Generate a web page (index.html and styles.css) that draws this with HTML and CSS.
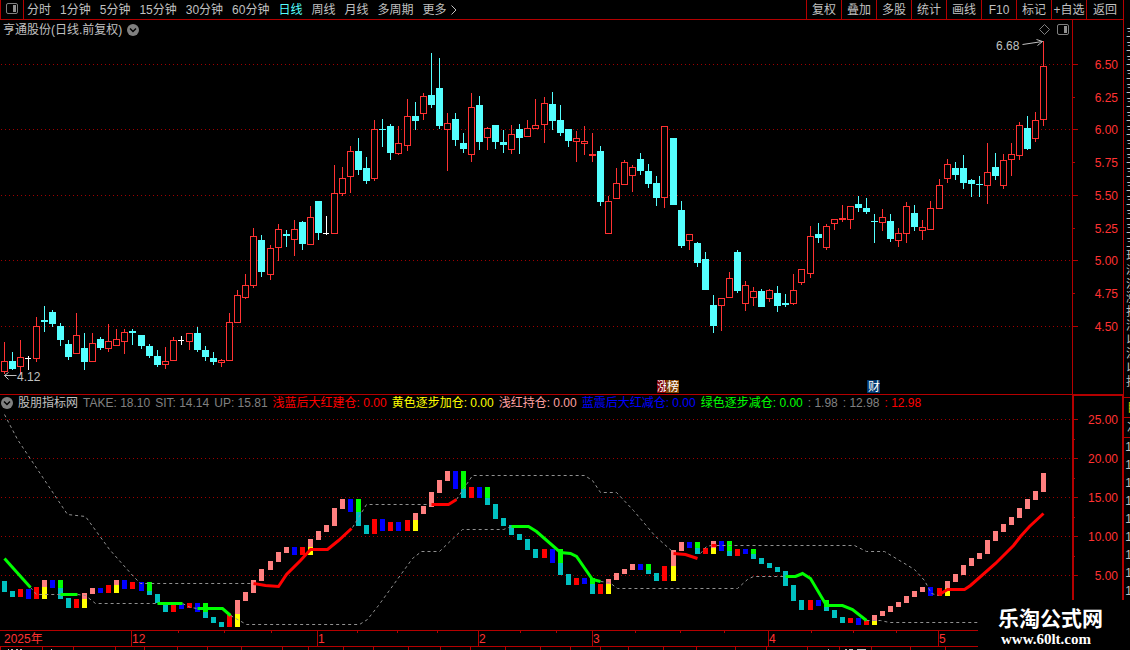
FILE: index.html
```html
<!DOCTYPE html>
<html lang="zh-CN">
<head>
  <meta charset="UTF-8">
  <title>亨通股份 日线</title>
  <link rel="stylesheet" href="styles.css">
</head>
<body>
  <main class="terminal">
    <nav class="toolbar">
      <button class="layout-btn" aria-label="布局">
        <svg width="12" height="11" viewBox="0 0 12 11"><rect x=".5" y=".5" width="11" height="10" rx="1.5" fill="none" stroke="#808080"/><rect x="7" y="2" width="3" height="7" fill="#909090"/></svg>
      </button>
      <div class="periods">
        <button>分时</button>
        <button>1分钟</button>
        <button>5分钟</button>
        <button>15分钟</button>
        <button>30分钟</button>
        <button>60分钟</button>
        <button class="active">日线</button>
        <button>周线</button>
        <button>月线</button>
        <button>多周期</button>
        <button class="more">更多
          <svg width="6" height="10" viewBox="0 0 6 10"><path d="M.5 .5L5 5L.5 9.5" fill="none" stroke="#c0c0c0"/></svg>
        </button>
      </div>
      <div class="tools">
        <button>复权</button>
        <button>叠加</button>
        <button>多股</button>
        <button>统计</button>
        <button>画线</button>
        <button>F10</button>
        <button>标记</button>
        <button>+自选</button>
        <button>返回</button>
      </div>
    </nav>

    <section class="panel price-panel">
      <div class="panel-head">
        <h1>亨通股份(日线.前复权)</h1>
        <button class="round" aria-label="展开">
          <svg width="12" height="12" viewBox="0 0 12 12"><circle cx="6" cy="6" r="6" fill="#808080"/><path d="M3 4.5L6 7.5L9 4.5" fill="none" stroke="#000" stroke-width="1.5"/></svg>
        </button>
      </div>
      <div class="panel-icons">
        <svg width="11" height="11" viewBox="0 0 11 11"><path d="M5.5 .5L10.5 5.5L5.5 10.5L.5 5.5Z" fill="none" stroke="#808080"/></svg>
        <svg width="12" height="11" viewBox="0 0 12 11"><rect x=".5" y=".5" width="11" height="10" rx="1.5" fill="none" stroke="#808080"/><rect x="7" y="2" width="3" height="7" fill="#909090"/></svg>
      </div>
      <svg class="chart" id="price" viewBox="0 20 1123 374"></svg>
    </section>

    <section class="panel indicator-panel">
      <div class="panel-head">
        <button class="round" aria-label="指标">
          <svg width="12" height="12" viewBox="0 0 12 12"><circle cx="6" cy="6" r="6" fill="#808080"/><path d="M3 4.5L6 7.5L9 4.5" fill="none" stroke="#000" stroke-width="1.5"/></svg>
        </button>
        <h2>股朋指标网</h2>
        <span>TAKE: 18.10</span>
        <span>SIT: 14.14</span>
        <span>UP: 15.81</span>
        <span class="red">浅蓝后大红建仓: 0.00</span>
        <span class="yellow">黄色逐步加仓: 0.00</span>
        <span class="pink">浅红持仓: 0.00</span>
        <span class="blue">蓝震后大红减仓: 0.00</span>
        <span class="green">绿色逐步减仓: 0.00</span>
        <span>: 1.98</span>
        <span>: 12.98</span>
        <span class="red">: 12.98</span>
      </div>
      <svg class="chart" id="indicator" viewBox="0 395 1123 235"></svg>
    </section>

    <svg class="chart" id="dates" viewBox="0 630 1123 20"></svg>
  </main>

  <aside class="side">
    <div class="side-text">主主主主主主主主主主主主主主主主现淡沙涨打涉以江以扣</div>
    <div class="side-tab yellow">目</div>
    <div class="side-tab">次</div>
    <div class="side-nums">1 1 1 1 1 1 1 1 1</div>
  </aside>

  <div class="watermark">
    <strong>乐淘公式网</strong>
    <span>www.60lt.com</span>
  </div>

  <script src="chart.js"></script>
</body>
</html>
```
FILE: styles.css
```css
* {
  margin: 0;
  padding: 0;
  box-sizing: border-box;
}
body {
  position: relative;
  display: flex;
  min-height: 100vh;
  overflow: hidden;
  background-color: #000;
  color: #c0c0c0;
  font-family: "Liberation Sans", "Noto Sans CJK SC", sans-serif;
  font-size: 12px;
  line-height: 16px;
}
button {
  background: none;
  border: none;
  color: inherit;
  font: inherit;
  white-space: nowrap;
  cursor: pointer;
}
svg {
  display: block;
}
.terminal {
  flex: 1;
  min-width: 0;
  border-right: 1px solid #b40000;
}
.toolbar {
  display: flex;
  height: 20px;
  border-bottom: 1px solid #b40000;
}
.layout-btn {
  display: flex;
  align-items: center;
  justify-content: center;
  width: 24px;
  padding-bottom: 2px;
  border-left: 1px solid #b40000;
  border-right: 1px solid #b40000;
}
.periods {
  display: flex;
  align-items: center;
  gap: 9px;
  padding-left: 3px;
}
.periods .active {
  color: #54ffff;
}
.more {
  display: flex;
  align-items: center;
  gap: 4px;
}
.tools {
  display: flex;
  margin-left: auto;
}
.tools button {
  width: 35px;
  border-left: 1px solid #b40000;
}
.tools button:last-child {
  width: 37px;
}
.panel {
  position: relative;
}
.panel-head {
  position: absolute;
  left: 3px;
  top: 2px;
  display: flex;
  align-items: center;
  gap: 5px;
  white-space: nowrap;
}
.panel-head h1, .panel-head h2 {
  font-size: 12px;
  font-weight: 400;
}
.panel-icons {
  position: absolute;
  right: 54px;
  top: 4px;
  display: flex;
  gap: 7px;
}
.indicator-panel {
  border-top: 1px solid #b40000;
}
.indicator-panel .panel-head {
  left: 1px;
  top: 0;
  color: #808080;
}
.indicator-panel h2 {
  color: #c0c0c0;
}
.panel-head .red { color: #f00; }
.panel-head .yellow { color: #ff0; }
.panel-head .pink { color: #ffa0a0; }
.panel-head .blue { color: #00f; }
.panel-head .green { color: #0f0; }
.chart {
  width: 100%;
  height: auto;
}
.chart rect, .chart line {
  shape-rendering: crispEdges;
}
.chart text {
  font-size: 12px;
}
.chart .axis {
  fill: #ff3232;
}
.side {
  width: 6px;
  padding-top: 25px;
  overflow: hidden;
}
.side-text {
  width: 12px;
  height: 372px;
  margin-left: 2px;
  overflow: hidden;
  line-height: 14px;
  word-break: break-all;
}
.side-tab {
  width: 14px;
  height: 20px;
  padding-left: 3px;
  line-height: 20px;
  border-top: 1px solid #b40000;
}
.side-tab.yellow {
  color: #c0c000;
}
.side-nums {
  width: 8px;
  border-top: 1px solid #b40000;
  line-height: 18px;
  text-align: right;
}
.watermark {
  position: absolute;
  right: 0;
  bottom: 0;
  display: flex;
  flex-direction: column;
  width: 152px;
  height: 50px;
  padding: 8px 0 0 20px;
  background-color: #000;
  color: #fff;
}
.watermark strong {
  font-size: 21px;
  line-height: 22px;
}
.watermark span {
  padding-left: 3px;
  font-family: "Liberation Serif", serif;
  font-size: 15px;
  font-weight: 700;
  line-height: 18px;
}
```
FILE: chart.js
```js
const LINE = '#b40000';
const UP = '#ff3232';
const DOWN = '#54ffff';

// kind, high, body top, body bottom, low
const candles = `
R 342 361 372 374|C 352 361 369 370|R 340 357 367 375|W 356 358 359 370|R 317 326 359 362
C 306 320 322 332|C 310 312 324 327|C 323 326 340 346|C 340 344 357 360|R 313 335 354 354
C 333 348 362 370|R 333 343 362 362|C 337 339 348 350|R 324 341 349 352|R 329 339 346 346
R 329 332 342 354|C 329 331 333 345|C 335 335 346 349|C 344 346 356 358|C 350 356 365 367
R 347 361 365 369|R 337 340 361 361|W 336 340 341 345|R 333 333 342 350|C 327 333 350 352
C 346 350 357 361|C 352 358 362 365|R 359 360 363 367|R 313 322 361 361|R 290 295 323 323
R 274 285 298 299|R 228 236 286 288|C 235 240 272 277|R 245 248 275 280|R 224 229 248 261
C 230 234 236 247|R 220 229 240 256|C 221 222 244 250|R 206 217 245 245|C 201 201 233 240
W 216 233 234 235|R 165 193 234 234|R 167 178 194 196|R 146 151 177 193|C 138 151 170 175
C 157 168 181 184|R 120 129 179 181|C 119 129 130 147|C 124 126 153 160|R 126 143 154 155
R 99 116 146 151|C 102 116 121 130|R 93 96 114 120|C 53 95 105 108|C 58 88 126 129
R 113 123 130 171|C 113 119 140 146|C 133 143 149 153|R 93 107 155 162|C 96 105 142 150
R 127 128 138 150|C 125 125 142 149|C 130 142 145 153|R 125 134 150 154|C 124 129 138 154
R 120 128 137 137|R 99 125 129 129|R 97 103 125 143|C 92 104 121 130|C 105 120 133 136
C 129 129 141 147|R 131 138 142 162|R 126 141 144 155|R 133 154 156 162|C 146 151 202 206
R 196 201 234 234|R 168 183 199 199|R 160 162 185 185|R 165 167 176 192|C 153 159 171 175
C 164 171 184 188|C 176 183 198 206|R 126 126 198 208|C 138 138 205 205|C 201 210 246 248
R 234 234 241 250|C 242 243 263 267|C 252 259 290 290|C 295 305 326 333|R 298 298 306 331
R 272 278 298 298|C 250 252 291 293|R 281 285 304 311|R 287 291 298 306|C 289 291 307 307
R 289 290 299 302|C 286 293 306 312|C 294 303 305 307|R 274 290 304 305|R 269 269 283 285
R 226 236 274 278|C 223 234 238 243|R 224 226 248 250|R 219 219 224 230|R 205 218 220 222
R 206 206 220 229|C 196 204 208 212|C 198 208 212 214|C 214 221 222 243|R 209 217 223 231
C 214 221 239 242|R 228 233 241 247|R 202 206 234 243|C 205 213 227 231|R 220 227 231 240
R 201 208 230 230|R 179 185 209 209|R 159 164 179 183|C 162 168 175 180|C 155 168 183 189
C 179 180 184 197|C 176 184 185 197|R 143 172 186 204|C 153 167 176 180|R 154 160 186 189
R 143 154 160 176|R 122 125 156 160|C 116 128 149 150|R 112 120 139 142|R 41 66 120 126`;

// one or two stacked blocks per day: colour, top, bottom
const blocks = `
T 581 592|T 591 597|R 589 597|B 589 599|R 587 599|P 580 587 Y 587 599|B 580 588|G 580 588 T 588 599
T 598 608|R 599 608|P 593 599 Y 599 608|P 588 594|B 588 593|R 585 593|P 580 585 Y 585 593|B 580 589
R 582 589|B 582 591|G 582 591 T 591 595|T 594 603|T 603 612|R 605 612|B 604 609|R 603 608
B 603 612|G 603 612 T 612 618|T 617 623|T 622 627|R 615 627|P 600 614 Y 614 627|P 592 601|P 580 593
P 569 581|P 561 570|P 552 562|P 547 553|B 547 555|R 547 555|P 539 547 Y 547 555|P 531 540
P 525 532|P 508 526|P 499 509|B 499 512|G 499 512 T 512 526|T 525 534|R 519 534|B 519 531
R 522 531|B 522 531|R 520 531|P 513 520 Y 520 531|P 506 514|P 492 507|P 480 493|P 471 481
B 471 489|G 471 489 T 489 498|R 487 498|B 487 498|G 487 498 T 498 505|T 504 519|T 518 526|T 525 535
T 534 540|T 539 550|T 549 558|R 549 558|B 549 563|G 549 563 T 563 575|T 574 585|R 578 585
B 578 584|G 578 584 T 584 594|R 584 594|P 579 584 Y 584 594|P 573 580|P 569 574|P 564 570|B 564 570
G 564 570 T 570 574|T 573 581|R 566 581|P 550 566 Y 566 581|P 542 551|B 542 548|G 542 548 T 548 554|R 548 554
P 541 548 Y 548 554|B 541 551|G 541 551 T 551 556|R 549 556|B 549 554|G 549 554 T 554 559|T 558 564|T 563 568
T 567 572|T 571 586|T 585 601|T 600 610|R 600 610|B 600 606|G 600 607 T 607 611|T 610 618
T 617 623|R 618 623|B 618 625|R 620 625|P 615 621 Y 621 625|P 611 616|P 606 612|P 602 607
P 596 603|P 591 597|P 587 592|B 587 596|R 588 596|P 581 588 Y 588 596|P 574 582|P 565 575
P 558 566|P 553 559|P 540 554|P 531 541|P 524 532|P 517 525|P 508 518|P 499 509
P 491 500|P 473 492`;

const blockColors = { T: '#00c0c0', R: '#ff0000', B: '#0000ff', P: '#ff8080', Y: '#ffff00', G: '#00ff00' };

const dashes = [
  '4,414 17,439 67,514 85,516 109,549 133,576 140,583 252,583',
  '352,527 366,504 430,504',
  '456,499 464,487 472,475 584,475 592,480 600,492 616,492 633,510 655,536 672,551',
  '700,553 706,546 711,545',
  '716,545 854,545 866,551 884,551 914,569 924,580 931,593 938,595',
  '30,587 36,594 60,594',
  '77,594 85,595 95,603 157,603',
  '182,603 190,607 197,608',
  '230,615 246,624 359,624 367,619 378,605 412,558 421,551 439,551 462,529 503,529 511,526',
  '600,581 609,582 617,588 737,588 747,579 753,576 785,576',
  '866,620 880,620 889,622 977,622'
];
const redLines = [
  '253,583 265,585 278,586 286,574 300,560 310,549 327,549 338,540 351,528',
  '431,504 448,504 456,499',
  '673,553 685,554 697,558',
  '711,545 716,545',
  '939,594 947,589 964,589 970,585 995,563 1013,545 1020,536 1029,526 1043,513'
];
const greenLines = [
  '4,558 30,587',
  '60,594 77,594',
  '157,603 182,603',
  '197,608 222,608 230,615',
  '511,526 528,526 536,531 560,552 570,553 576,556 592,579 600,581',
  '785,576 795,576 802,573 810,578 826,605 842,605 852,609 866,620'
];

const dayX = i => Math.floor(4.02 + i * 8.0602);
const rows = data => data.trim().split(/[|\n]/);
const rect = (x, y, w, h, fill) => `<rect x="${x}" y="${y}" width="${w}" height="${h}" fill="${fill}"/>`;
const text = (x, y, s, extra) => `<text x="${x}" y="${y}" ${extra || 'class="axis"'}>${s}</text>`;
const poly = (points, stroke, width, dash) =>
  `<polyline points="${points}" transform="translate(.5 .5)" fill="none" stroke="${stroke}" stroke-width="${width}" stroke-dasharray="${dash || 'none'}"/>`;
const gridLine = y =>
  `<line x1="1" x2="1072" y1="${y + 0.5}" y2="${y + 0.5}" stroke="#a00000" stroke-dasharray="1 3"/>`;

function drawPrice() {
  let out = '';
  [64, 129, 195, 260, 326].forEach(y => { out += gridLine(y); });
  rows(candles).forEach((row, i) => {
    const [kind, ...v] = row.split(' ');
    const [high, top, bottom, low] = v.map(Number);
    const x = dayX(i);
    const color = { R: UP, C: DOWN, W: '#ffffff' }[kind];
    out += rect(x, high, 1, low - high, color);
    out += rect(x - 3, top, kind === 'W' ? 6 : 7, bottom - top, color);
    if (kind === 'R' && bottom - top > 2) {
      out += rect(x - 2, top + 1, 5, bottom - top - 2, '#000');
    }
  });

  out += rect(1072, 20, 1, 374, LINE);
  const labels = ['6.50', '6.25', '6.00', '5.75', '5.50', '5.25', '5.00', '4.75', '4.50'];
  [64, 97, 129, 162, 195, 228, 260, 293, 326].forEach((y, i) => {
    out += rect(1073, y, i % 2 ? 2 : 5, 1, LINE);
    out += text(1118, y + 5, labels[i], 'class="axis" text-anchor="end"');
  });

  // highest and lowest marks
  out += text(996, 50, '6.68', 'fill="#c0c0c0"');
  out += poly('1022,44 1042,41', '#c0c0c0', 1) + poly('1036,39 1042,41 1037,45', '#c0c0c0', 1);
  out += text(17, 381, '4.12', 'fill="#c0c0c0"');
  out += poly('16,375 4,375', '#c0c0c0', 1) + poly('8,372 4,375 8,379', '#c0c0c0', 1);

  out += rect(657, 380, 10, 13, '#800000') + text(657, 391, '涨', 'fill="#fff"');
  out += rect(666, 380, 13, 13, '#804000') + text(667, 391, '榜', 'fill="#fff"');
  out += rect(867, 380, 13, 13, '#003870') + text(868, 391, '财', 'fill="#fff"');
  document.getElementById('price').innerHTML = out;
}

function drawIndicator() {
  let out = '';
  const ys = [419, 458, 497, 536, 575];
  ys.forEach(y => { out += gridLine(y); });
  rows(blocks).forEach((row, i) => {
    const v = row.split(' ');
    for (let k = 0; k < v.length; k += 3) {
      out += rect(dayX(i) - 2, +v[k + 1], 5, v[k + 2] - v[k + 1], blockColors[v[k]]);
    }
  });
  dashes.forEach(p => { out += poly(p, '#909090', 1, '3 3'); });
  redLines.forEach(p => { out += poly(p, '#ff0000', 3); });
  greenLines.forEach(p => { out += poly(p, '#00ff00', 3); });

  out += rect(1072, 395, 2, 205, LINE) + rect(1122, 395, 1, 205, LINE) + rect(1072, 395, 51, 1, LINE);
  ys.forEach((y, i) => {
    out += rect(1074, y, 4, 1, LINE);
    if (i < 4) out += rect(1074, y + 20, 1, 1, LINE);
    out += text(1118, y + 5, (25 - i * 5) + '.00', 'class="axis" text-anchor="end"');
  });
  document.getElementById('indicator').innerHTML = out;
}

function drawDates() {
  let out = rect(0, 630, 1123, 1, LINE) + rect(0, 646, 1123, 1, LINE);
  out += text(4, 643, '2025年');
  [[131, '12'], [317, '1'], [478, '2'], [592, '3'], [768, '4'], [938, '5']].forEach(([x, s]) => {
    out += rect(x, 631, 1, 15, LINE) + text(x + 1, 643, s);
  });
  [178, 224, 271, 357, 397, 437, 520, 556, 635, 680, 724, 811, 853, 896].forEach(x => {
    out += rect(x, 631, 1, 2, LINE);
  });
  [0, 42, 73, 115, 144, 177, 207, 241, 282, 308, 343, 373, 408, 440, 470, 505, 540, 570, 600, 628, 663, 696, 735, 766, 807, 839, 871, 910, 945].forEach(x => {
    out += rect(x, 647, 1, 3, LINE);
  });
  [[8, 1], [11, 2], [16, 2], [20, 2], [51, 1], [828, 1], [845, 2], [849, 4], [857, 9]].forEach(([x, w]) => {
    out += rect(x, 649, w, 1, '#c0c0c0');
  });
  document.getElementById('dates').innerHTML = out;
}

drawPrice();
drawIndicator();
drawDates();
```
